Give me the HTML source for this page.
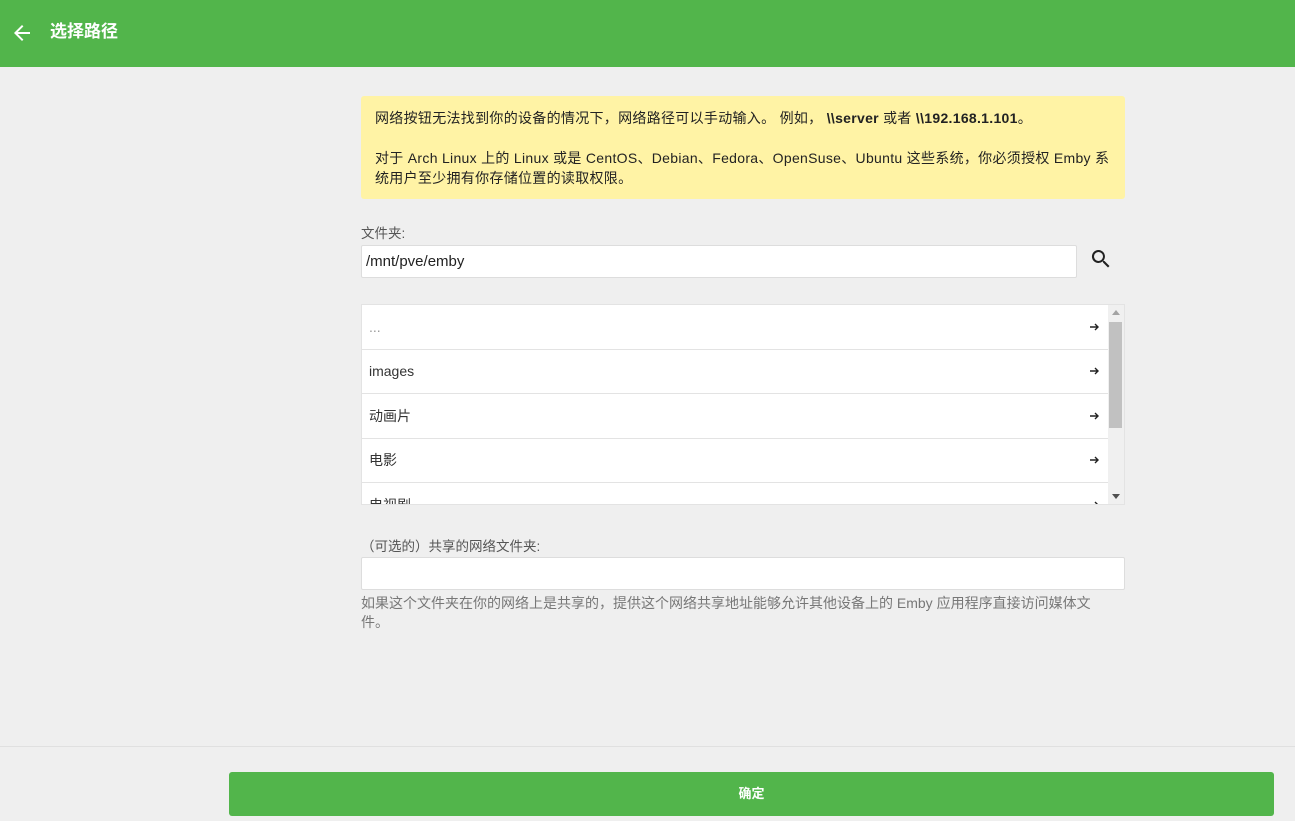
<!DOCTYPE html>
<html><head><meta charset="utf-8"><style>
*{box-sizing:border-box;margin:0;padding:0}
body{width:1295px;height:821px;background:#efefef;font-family:"Liberation Sans","Noto Sans CJK SC",sans-serif;position:relative;overflow:hidden;color:#222}
.hdr{position:absolute;left:0;top:0;width:1295px;height:67px;background:#52b54b}
.hdr .t{position:absolute;left:50px;top:20px;color:#fff;font-size:17px;font-weight:bold;line-height:24px}
.hdr svg{position:absolute;left:10px;top:21px}
.note{position:absolute;left:361px;top:96px;width:764px;height:103px;background:#fff3a5;border-radius:3px;font-size:14px;line-height:20px;padding:12px 12px 12px 14px;color:#222;letter-spacing:0.3px}
.lbl{position:absolute;font-size:13.5px;color:#555}
.inp{position:absolute;background:#fff;border:1px solid #ddd;border-radius:2px}
.list{position:absolute;left:361px;top:304px;width:764px;height:201px;background:#fff;border:1px solid #e3e3e3;overflow:hidden}
.row{position:absolute;left:0;width:746px;height:45px;border-bottom:1px solid #e3e3e3;font-size:14px;color:#333;padding-left:7px;line-height:44px}
.row svg{position:absolute;right:8px;top:17px}
.sb{position:absolute;right:0;top:0;width:16px;height:199px;background:#f0f0f0}
.thumb{position:absolute;left:1px;top:17px;width:13px;height:106px;background:#c1c1c1}
.foot{position:absolute;left:0;top:746px;width:1295px;height:1px;background:#e0e0e0}
.btn{position:absolute;left:229px;top:772px;width:1045px;height:44px;background:#52b54b;border-radius:3px;color:#fff;font-size:13px;font-weight:bold;text-align:center;line-height:44px}
</style></head><body>
<div class="hdr"><svg width="24" height="24" viewBox="0 0 24 24"><path d="M20 11H7.8l5.6-5.6L12 4l-8 8 8 8 1.4-1.4L7.8 13H20z" fill="#fff"/></svg><div class="t">选择路径</div></div>
<div class="note">网络按钮无法找到你的设备的情况下，网络路径可以手动输入。 例如， <b>\\server</b> 或者 <b>\\192.168.1.101</b>。<br><br>对于 Arch Linux 上的 Linux 或是 CentOS、Debian、Fedora、OpenSuse、Ubuntu 这些系统，你必须授权 Emby 系<br>统用户至少拥有你存储位置的读取权限。</div>
<div class="lbl" style="left:361px;top:222px">文件夹:</div>
<div class="inp" style="left:361px;top:245px;width:716px;height:33px;font-size:15px;line-height:31px;padding-left:4px;color:#222">/mnt/pve/emby</div>
<svg style="position:absolute;left:1089px;top:247px" width="24" height="24" viewBox="0 0 24 24"><path d="M15.5 14h-.8l-.3-.3A6.5 6.5 0 1 0 9.5 16a6.5 6.5 0 0 0 4.2-1.6l.3.3v.8l5 5 1.5-1.5zm-6 0a4.5 4.5 0 1 1 0-9 4.5 4.5 0 0 1 0 9z" fill="#222"/></svg>
<div class="list">
<div class="row" style="top:0;color:#999">...<svg width="10" height="10" viewBox="0 0 10 10"><path d="M0 5h8M5 2l3 3-3 3" stroke="#222" stroke-width="1.4" fill="none"/></svg></div>
<div class="row" style="top:44px">images<svg width="10" height="10" viewBox="0 0 10 10"><path d="M0 5h8M5 2l3 3-3 3" stroke="#222" stroke-width="1.4" fill="none"/></svg></div>
<div class="row" style="top:89px">动画片<svg width="10" height="10" viewBox="0 0 10 10"><path d="M0 5h8M5 2l3 3-3 3" stroke="#222" stroke-width="1.4" fill="none"/></svg></div>
<div class="row" style="top:133px">电影<svg width="10" height="10" viewBox="0 0 10 10"><path d="M0 5h8M5 2l3 3-3 3" stroke="#222" stroke-width="1.4" fill="none"/></svg></div>
<div class="row" style="top:178px;border:0">电视剧<svg width="10" height="10" viewBox="0 0 10 10"><path d="M0 5h8M5 2l3 3-3 3" stroke="#222" stroke-width="1.4" fill="none"/></svg></div>
<div class="sb"><div class="thumb"></div>
<svg style="position:absolute;left:4px;top:5px" width="8" height="5"><path d="M0 5L4 0L8 5z" fill="#a3a3a3"/></svg>
<svg style="position:absolute;left:4px;top:189px" width="8" height="5"><path d="M0 0L4 5L8 0z" fill="#505050"/></svg></div>
</div>
<div class="lbl" style="left:361px;top:535px">（可选的）共享的网络文件夹:</div>
<div class="inp" style="left:361px;top:557px;width:764px;height:33px"></div>
<div class="lbl" style="left:361px;top:594px;width:764px;line-height:19px;color:#777;font-size:14px">如果这个文件夹在你的网络上是共享的，提供这个网络共享地址能够允许其他设备上的 Emby 应用程序直接访问媒体文<br>件。</div>
<div class="foot"></div>
<div class="btn">确定</div>
</body></html>
